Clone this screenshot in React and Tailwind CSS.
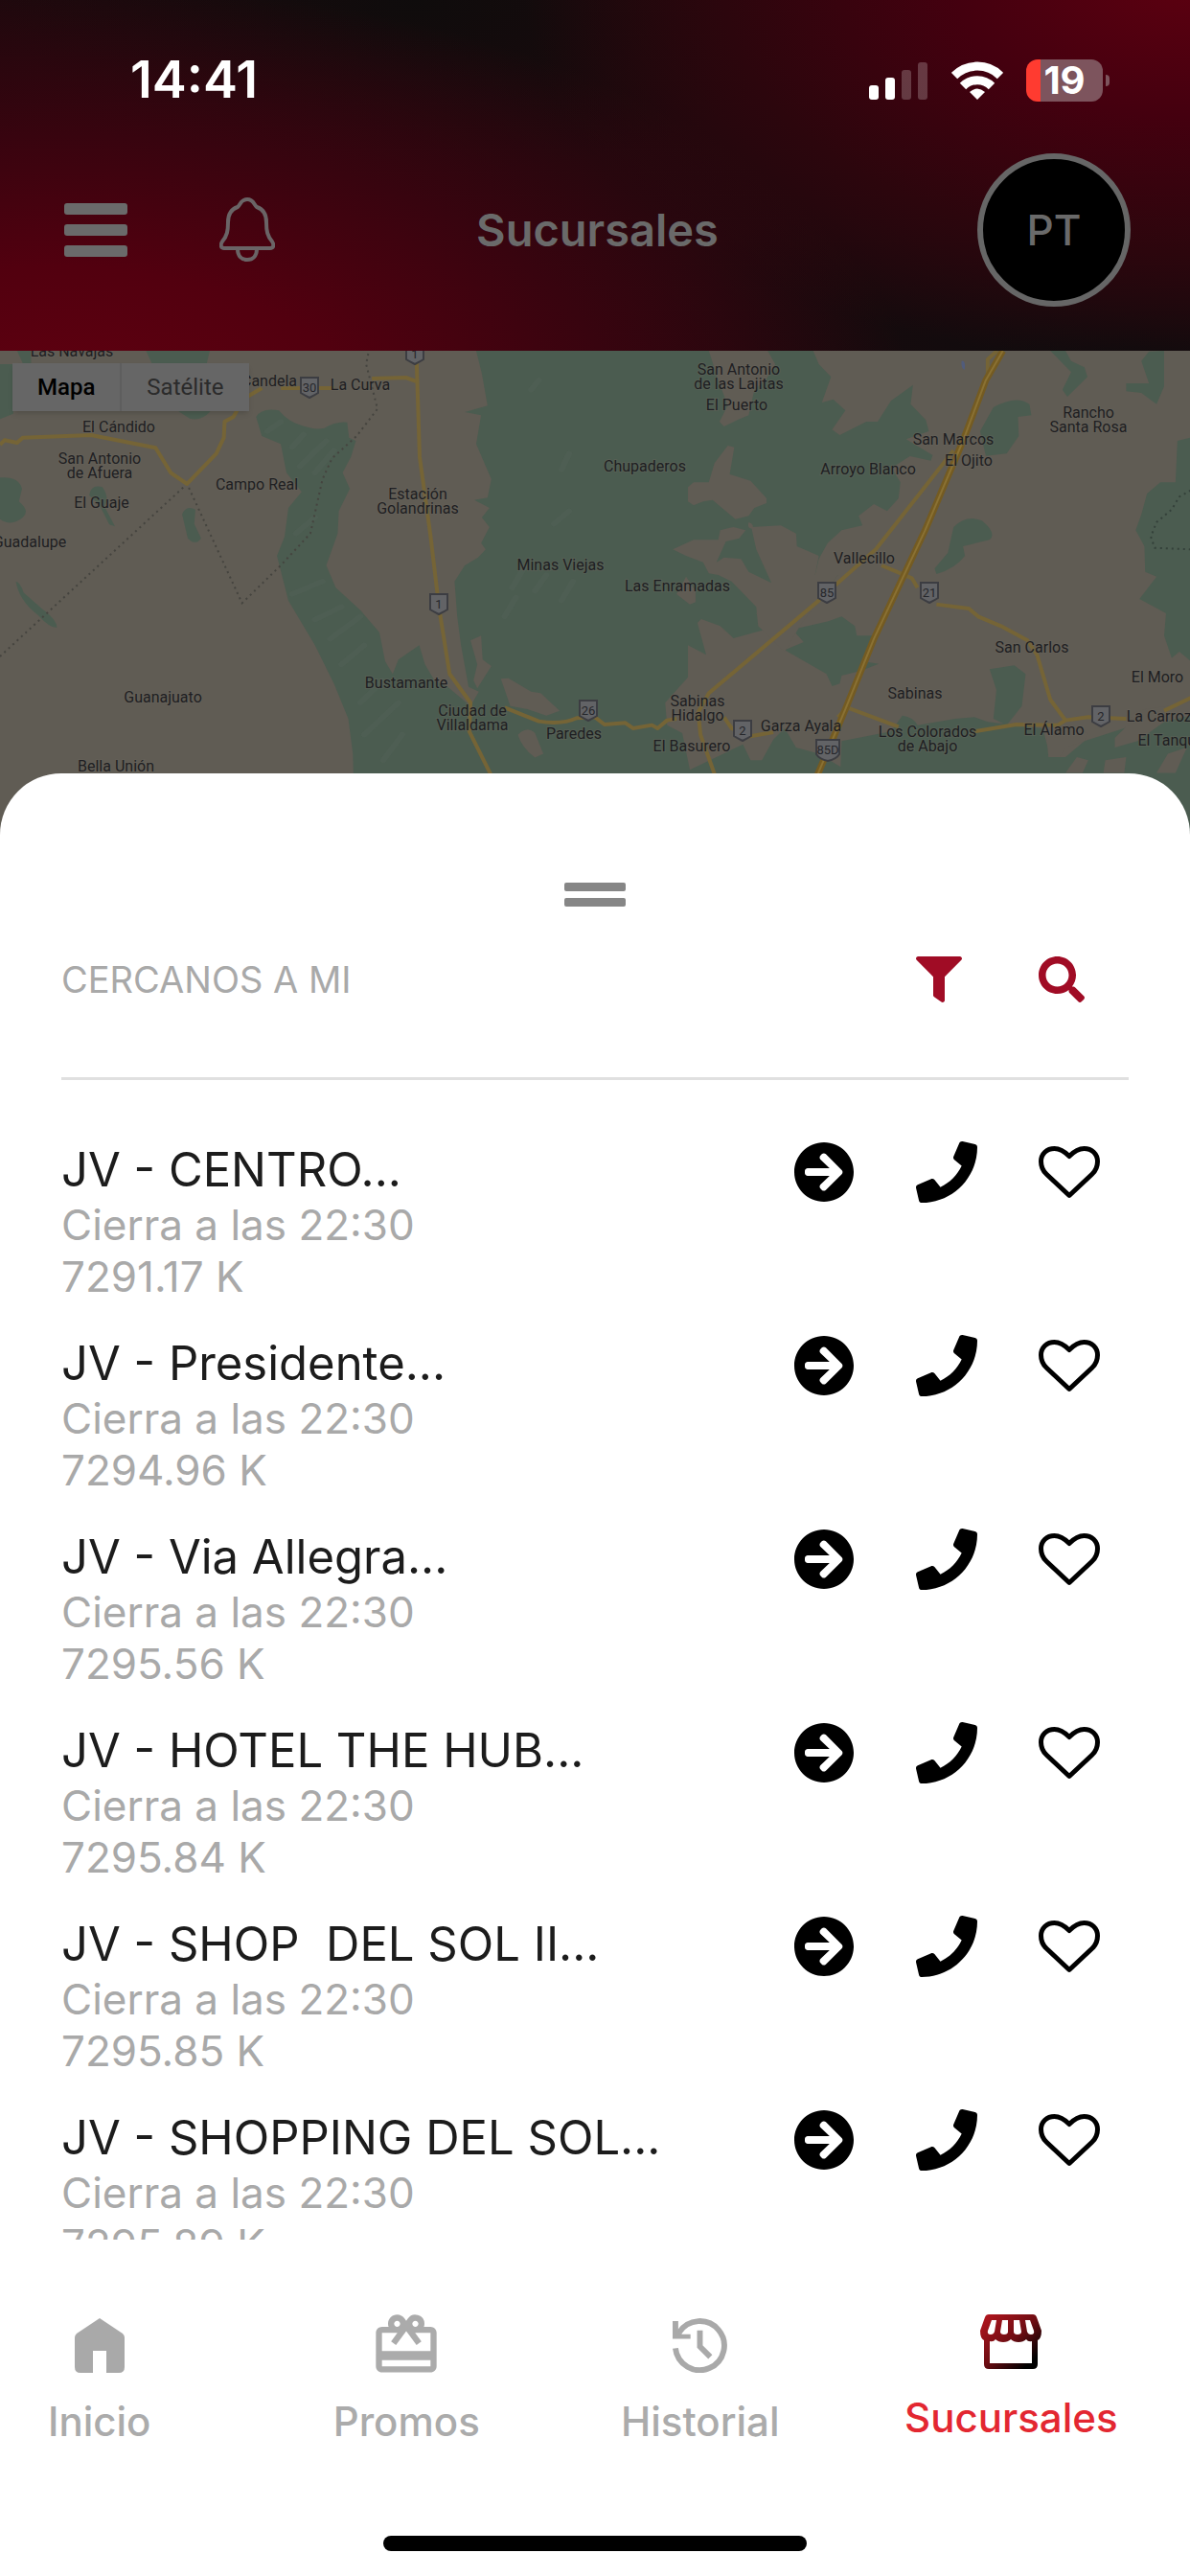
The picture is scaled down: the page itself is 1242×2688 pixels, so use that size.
import React, { useState } from 'react';
import { FaArrowCircleRight, FaFilter, FaPhone, FaSearch } from 'react-icons/fa';
import { MdCardGiftcard } from 'react-icons/md';

const sucursales = [
  { id: 1, nombre: 'JV - CENTRO...', horario: 'Cierra a las 22:30', distancia: '7291.17 K' },
  { id: 2, nombre: 'JV - Presidente...', horario: 'Cierra a las 22:30', distancia: '7294.96 K' },
  { id: 3, nombre: 'JV - Via Allegra...', horario: 'Cierra a las 22:30', distancia: '7295.56 K' },
  { id: 4, nombre: 'JV - HOTEL THE HUB...', horario: 'Cierra a las 22:30', distancia: '7295.84 K' },
  { id: 5, nombre: 'JV - SHOP  DEL SOL II...', horario: 'Cierra a las 22:30', distancia: '7295.85 K' },
  { id: 6, nombre: 'JV - SHOPPING DEL SOL...', horario: 'Cierra a las 22:30', distancia: '7295.89 K' },
];

// [x, y, lines]
const poblados = [
  [75, 6, ['Las Navajas']],
  [281, 37, ['Candela']],
  [376, 41, ['La Curva']],
  [124, 85, ['El Cándido']],
  [104, 118, ['San Antonio', 'de Afuera']],
  [106, 164, ['El Guaje']],
  [268, 145, ['Campo Real']],
  [436, 155, ['Estación', 'Golandrinas']],
  [31, 205, ['Guadalupe']],
  [585, 229, ['Minas Viejas']],
  [424, 352, ['Bustamante']],
  [170, 367, ['Guanajuato']],
  [493, 381, ['Ciudad de', 'Villaldama']],
  [599, 405, ['Paredes']],
  [121, 439, ['Bella Unión']],
  [771, 25, ['San Antonio', 'de las Lajitas']],
  [769, 62, ['El Puerto']],
  [995, 98, ['San Marcos']],
  [1011, 120, ['El Ojito']],
  [673, 126, ['Chupaderos']],
  [906, 129, ['Arroyo Blanco']],
  [1136, 70, ['Rancho', 'Santa Rosa']],
  [902, 222, ['Vallecillo']],
  [707, 251, ['Las Enramadas']],
  [1077, 315, ['San Carlos']],
  [955, 363, ['Sabinas']],
  [728, 371, ['Sabinas', 'Hidalgo']],
  [836, 397, ['Garza Ayala']],
  [722, 418, ['El Basurero']],
  [968, 403, ['Los Colorados', 'de Abajo']],
  [1100, 401, ['El Álamo']],
  [1208, 346, ['El Moro']],
  [1214, 387, ['La Carroza']],
  [1222, 412, ['El Tanque']],
];

const escudos = [
  [433, 3, '1'],
  [323, 38, '30'],
  [458, 264, '1'],
  [614, 375, '26'],
  [863, 252, '85'],
  [970, 252, '21'],
  [775, 396, '2'],
  [864, 416, '85D'],
  [1149, 381, '2'],
];

const Mapa = () => (
  <svg viewBox="0 0 1242 510" preserveAspectRatio="xMidYMin slice" className="h-full w-full" aria-label="Mapa de sucursales">
    <rect width="1242" height="510" fill="#605c54" />

    {/* west tile */}
    <g transform="translate(0 -6) scale(.396 .3333)" fill="#4b5c50">
      <path d="M675 225Q690 195 735 205Q760 240 790 250Q830 268 855 260Q885 238 915 242L920 290L938 300L925 350L903 400L922 450L893 520L890 590L860 690L885 760L950 830L1000 900L1015 990L1035 1030L1050 985L1105 940L1120 1000L1145 1050L1180 1070L1240 1130L1262 1085L1235 1070L1215 940L1205 850L1198 740L1225 690L1260 665L1280 640L1268 620L1290 570L1270 540L1290 510L1250 485L1285 478L1295 420L1255 310L1268 220L1225 210L1285 190L1270 90L1255 18H1570V1530H935L930 1280L918 1170L880 1060L830 940L760 800L730 660L750 600L760 510L795 460L755 400L740 310L690 285Z" />
      <path d="M0 415Q50 410 58 450L50 490Q80 520 60 540Q30 570 0 545Z" />
      <path d="M235 470Q240 435 270 445Q290 480 275 505L303 568L288 562L262 500Z" />
      <path d="M480 530Q490 500 515 515L512 560L530 605Q515 630 495 605Z" />
      <path d="M42 740Q55 745 62 775L110 825Q150 860 150 885Q130 885 100 845Q50 800 42 740Z" />
      <path d="M385 18H553L545 57H400ZM470 207H555Q530 240 500 230ZM0 60H35V215L0 232ZM45 18H82V57H60Z" />
      <path d="M1320 1045L1340 1043L1400 1085L1425 1090L1475 1145L1440 1160L1390 1140L1345 1130ZM1365 1220Q1390 1190 1410 1215L1432 1280L1410 1292Q1375 1260 1365 1220ZM1240 925L1268 910L1272 985L1295 1005L1258 1075L1248 1050L1258 1000Z" fill="#605c54" />
      <g fill="none" stroke="#5a6b5e" strokeWidth="16" strokeLinecap="round" opacity=".22">
        <path d="M705 270L740 240M770 320L800 280M790 380L860 300M830 400L880 330M780 590L830 540M770 780L850 740M830 860L900 820M870 920L950 850M900 1000L960 940M950 1120L1010 1050M960 1220L1050 1120M1010 1300L1060 1220M1350 760L1380 700M1410 770L1440 720M1330 850L1360 790M1480 800L1510 740M1460 560L1500 520M1400 140L1420 110M1480 390L1500 340" />
      </g>
      <path
        fill="none" stroke="#45443f" strokeWidth="2" strokeDasharray="2 4" vectorEffect="non-scaling-stroke"
        d="M0 975L493 435L638 808L740 690L818 590L850 420L875 355L940 285L995 200L965 60L972 18"
      />
      <g fill="none" stroke="#756436" strokeWidth="4" strokeLinejoin="round">
        <path vectorEffect="non-scaling-stroke" d="M0 312L12 298L45 306L60 290L240 282L410 322L450 400L493 435L570 340L590 290L592 240L615 225L625 205M640 170L690 135M740 135H880M980 105L1070 102L1100 115" />
        <path vectorEffect="non-scaling-stroke" d="M1098 50L1106 350L1135 600L1158 830L1185 1030L1240 1120L1237 1210L1300 1360M1330 1135L1420 1178Q1480 1190 1520 1168L1570 1165" />
      </g>
    </g>

    {/* east tile */}
    <g transform="translate(621 -6) scale(.396 .3333)" fill="#605c54">
      <path fill="#4b5c50" d="M0 18H575L590 60L622 100L598 180L628 170L660 205L625 265L645 282L715 240L745 240L780 175L838 125L832 185L872 235L880 270L820 295L890 345L885 362L830 348L782 385L805 430L800 480L770 520L735 498L695 535L705 565L650 580L613 620L590 670L580 720L640 720L600 785L530 770L425 840L450 890L365 918L330 880L280 858L270 870L293 970L245 940V1040L185 1120L190 1190L230 1215L250 1330V1530H0Z" />
      <path fill="#4b5c50" d="M520 890L560 880L615 865L650 850L685 880L690 910H735L720 960L705 990L748 998L700 1020L650 1035L645 1060L625 1068L610 1030L500 955L550 930ZM895 700L930 650L945 570Q980 530 1020 550Q1060 590 1040 610L970 630L975 660Q950 700 900 717ZM1015 270L1050 195Q1110 155 1145 185L1150 220L1115 225L1117 285L1085 340L1030 347ZM1200 18H1240L1255 50L1290 70L1298 100L1245 162L1232 140L1255 85ZM1440 50L1460 20L1500 18V130L1480 185L1440 150L1400 145L1400 120H1460ZM1490 430L1530 430L1535 300L1570 290V990L1540 960L1520 980L1500 910L1505 840L1435 795L1480 725L1450 710L1448 630L1425 580L1440 530L1455 465Z" />
      <path fill="#4b5c50" d="M1040 1015L1105 1003L1135 1030L1125 1130L1085 1190L1050 1170L1058 1080ZM440 1300L470 1235L500 1200L530 1260L590 1280L660 1330H740L640 1530H250V1330L390 1250L410 1300ZM650 1240L780 1210L810 1160Q840 1165 850 1190L950 1170L1000 1165L1035 1180L1180 1200L1200 1290L1240 1290L1290 1240L1420 1190L1570 1150V1530H640Z" />
      <path d="M300 18L455 18L475 60L450 110L420 140L405 220L375 235L340 255L328 240L350 190L325 110ZM350 315L367 320L355 405L410 425L452 480V495L420 510L405 535L370 545L310 485L285 490L260 502L245 490V445L260 430L300 430L315 370ZM405 555Q420 560 415 575Q400 575 405 555ZM205 640L260 610L325 610L330 580L365 570L397 580L380 605L345 615L320 680L340 665L385 670L405 710L465 745L425 640L412 570L490 565L530 590L532 630L590 660L580 720L640 720L610 770L545 870L500 960L430 880L425 820L360 740L325 720L300 715L285 680L240 660ZM215 780L240 725L265 770L265 805L250 812Z" />
      <path d="M1195 1290L1190 1220L1260 1200L1300 1215L1290 1240L1240 1260L1225 1290ZM1400 1160L1440 1175L1400 1195L1370 1230V1260L1430 1240L1500 1180L1570 1160V1120L1450 1140ZM1240 1340L1270 1290L1300 1300L1285 1340ZM1345 1300L1400 1290L1395 1340H1340ZM1480 1340L1510 1280L1560 1260L1530 1340Z" />
      <path fill="#515c7b" d="M966 50Q978 48 974 78Q964 72 966 50Z" />
      <g fill="none" stroke="#756436" strokeWidth="4" strokeLinejoin="round">
        <path vectorEffect="non-scaling-stroke" d="M945 330L740 640L640 745L590 800L300 1090L272 1150L278 1220L320 1360M755 690L800 712L835 730L850 760M900 812L985 825L1010 850L1070 880L1140 925L1165 970L1200 1110L1240 1175L1300 1165L1400 1170M1500 1145L1570 1105M1240 1175L1220 1190L1110 1188L1000 1210M800 1195L665 1135L640 1165M470 1212L410 1225L360 1200L340 1165M0 1165L25 1188L80 1183L100 1200L150 1190L165 1200L190 1175L215 1170" />
        <path vectorEffect="non-scaling-stroke" d="M1060 18L1035 45V90" />
      </g>
      <g fill="none" strokeLinejoin="round">
        <path vectorEffect="non-scaling-stroke" stroke="#745b22" strokeWidth="7" d="M1075 18L1030 110L970 300L870 580L735 920L660 1140L585 1350" />
        <path vectorEffect="non-scaling-stroke" stroke="#8a7133" strokeWidth="2" d="M1075 18L1030 110L970 300L870 580L735 920L660 1140L585 1350" />
        <path vectorEffect="non-scaling-stroke" stroke="#34413a" strokeWidth="2" strokeDasharray="2 4" d="M1570 455L1540 475L1520 515L1480 555L1465 600L1475 635L1570 640" />
      </g>
    </g>

    <g fontFamily="Roboto, sans-serif" fontSize="16" textAnchor="middle">
      {escudos.map(([x, y, numero]) => (
        <g key={`${numero}-${x}`}>
          <path
            transform={`translate(${x} ${y})`}
            d={numero.length > 2 ? 'M-12 -10H12V5Q9 10 0 12Q-9 10 -12 5Z' : 'M-9 -10H9V6Q6 8 0 11Q-6 8 -9 6Z'}
            fill="#626366" stroke="#3c3d42" strokeWidth="2"
          />
          <text x={x} y={y + 5} fontSize="13" fill="#26272b">{numero}</text>
        </g>
      ))}
      {poblados.map(([x, y, lineas]) => (
        <text key={lineas[0] + x} fill="#1e1e22" stroke="#68645c" strokeOpacity=".4" strokeWidth="2" paintOrder="stroke">
          {lineas.map((linea, i) => (
            <tspan key={linea} x={x} y={y + i * 15}>{linea}</tspan>
          ))}
        </text>
      ))}
    </g>
  </svg>
);

const StatusBar = () => (
  <div className="flex h-[120px] items-end justify-between pr-[84px] pb-[14px] pl-[136px] text-white">
    <span className="text-[54px] leading-[46px] font-semibold">14:41</span>
    <div className="flex items-center gap-6">
      <svg viewBox="0 0 62 40" className="h-10 w-[62px]" fill="#fff">
        <rect x="0" y="25" width="10" height="15" rx="3" />
        <rect x="17" y="17" width="10" height="23" rx="3" />
        <rect x="34" y="9" width="10" height="31" rx="3" opacity=".22" />
        <rect x="51" y="1" width="10" height="39" rx="3" opacity=".22" />
      </svg>
      <svg viewBox="0 0 54 40" className="h-10 w-[54px]" fill="none" stroke="#fff" strokeWidth="9">
        <path d="M3 15A34 34 0 0 1 51 15" />
        <path d="M12 26A21 21 0 0 1 42 26" />
        <path d="M27 40L19 32Q27 25 35 32Z" fill="#fff" stroke="none" />
      </svg>
      <div className="flex items-center gap-[3px]">
        <div className="flex h-11 w-20 items-center justify-center rounded-xl bg-linear-to-r from-[#ff3b30] from-[19%] to-[#7d545d] to-[19%] text-[40px] leading-none font-bold">
          19
        </div>
        <span className="h-3 w-1 rounded-r-full bg-[#7d545d]"></span>
      </div>
    </div>
  </div>
);

const Header = () => (
  <header className="h-[366px] shrink-0 bg-[#1c090d] bg-[radial-gradient(ellipse_72%_125%_at_5%_120%,#620010_0%,#52000f_35%,#38040f_65%,transparent_100%),radial-gradient(ellipse_56%_110%_at_100%_-5%,#5c0010_0%,#44000f_35%,#2c060d_70%,transparent_100%),radial-gradient(ellipse_35%_50%_at_35%_0%,#0f0c0c_0%,transparent_100%),radial-gradient(ellipse_45%_50%_at_95%_100%,#0e0c0d_0%,transparent_100%)]">
    <StatusBar />
    <div className="mt-10 flex h-40 items-center justify-between pr-[62px] pl-[67px] text-[#6a6a6a]">
      <div className="flex flex-1 items-center gap-24">
        <button type="button" aria-label="Menú" className="flex w-[66px] flex-col gap-[10px]">
          <span className="h-3 rounded-[3px] bg-[#6a6a6a]"></span>
          <span className="h-3 rounded-[3px] bg-[#6a6a6a]"></span>
          <span className="h-3 rounded-[3px] bg-[#6a6a6a]"></span>
        </button>
        <button type="button" aria-label="Notificaciones">
          <svg viewBox="0 0 58 68" className="h-[68px] w-[58px]" fill="none" stroke="#6a6466" strokeWidth="4" strokeLinejoin="round">
            <path d="M5 53C1 53 1 49 3 46C8 40 9 35 9 26C9 17 13 12 19 10C22 8 22 2 29 2S36 8 39 10C45 12 49 17 49 26C49 35 50 40 55 46C57 49 57 53 53 53Z" />
            <path d="M19 54C19 61 23 65 29 65S39 61 39 54" />
          </svg>
        </button>
      </div>
      <h1 className="text-[47px] font-semibold">Sucursales</h1>
      <div className="flex flex-1 justify-end">
        <button type="button" className="flex size-40 items-center justify-center rounded-full border-[6px] border-[#666] bg-black text-[44px] font-medium">
          PT
        </button>
      </div>
    </div>
  </header>
);

const HeartIcon = () => (
  <svg viewBox="0 0 64 64" className="size-16" fill="none" stroke="#000" strokeWidth="5" strokeLinejoin="round">
    <path d="M32 56.5L8.5 34.5C4 30.5 2.5 26 2.5 21C2.5 13 8.5 7.5 16.5 7.5C23 7.5 27.5 11 32 15.5C36.5 11 41 7.5 47.5 7.5C55.5 7.5 61.5 13 61.5 21C61.5 26 60 30.5 55.5 34.5Z" />
  </svg>
);

const SucursalItem = ({ sucursal }) => (
  <li className="flex h-[202px] items-start justify-between">
    <div className="whitespace-pre">
      <h3 className="text-[49px] leading-[60px] text-[#1c1c1c]">{sucursal.nombre}</h3>
      <p className="text-[44px] leading-[54px] text-[#a9a9a9]">{sucursal.horario}</p>
      <p className="text-[44px] leading-[54px] text-[#a9a9a9]">{sucursal.distancia}</p>
    </div>
    <div className="flex gap-16 pr-[30px] text-black">
      <button type="button" aria-label="Ver sucursal"><FaArrowCircleRight className="size-16" /></button>
      <button type="button" aria-label="Llamar"><FaPhone className="size-16" /></button>
      <button type="button" aria-label="Favorito"><HeartIcon /></button>
    </div>
  </li>
);

const HomeIcon = () => (
  <svg viewBox="0 0 52 57" className="h-[57px] w-[52px]" fill="#a9a9a9">
    <path d="M26 0L50 16Q52 18 52 20V51Q52 57 46 57H33V34H19V57H6Q0 57 0 51V20Q0 18 2 16Z" />
  </svg>
);

const HistoryIcon = () => (
  <svg viewBox="0 0 58 58" className="h-[57px] w-[57px]" fill="none" stroke="#a9a9a9" strokeWidth="6">
    <path d="M3 32A26 26 0 1 0 7 15" />
    <path d="M29 13V30L40 41" />
    <path d="M0 3H6V13L10 17H19V22H0Z" fill="#a9a9a9" stroke="none" />
  </svg>
);

const StoreIcon = () => (
  <svg viewBox="0 0 64 57" className="h-[57px] w-16">
    <defs>
      <linearGradient id="tienda" x1="0" y1="0" x2="1" y2="1">
        <stop offset="0" stopColor="#b8161f" />
        <stop offset=".5" stopColor="#6d0d13" />
        <stop offset=".85" stopColor="#000" />
      </linearGradient>
    </defs>
    <path
      fill="url(#tienda)" fillRule="evenodd"
      d="M9 0H55Q58 0 59 3L64 17Q64 25 60 27V52Q60 57 55 57H9Q4 57 4 52V27Q0 25 0 17L5 3Q6 0 9 0ZM10 28Q14 29 16 26Q19 29 24 29Q29 29 32 26Q35 29 40 29Q45 29 48 26Q50 29 54 28V51H10ZM12 6H17L15 18Q14 21 11 21Q7 21 8 17ZM23 6H29V18Q29 21 25 21Q21 21 21 18ZM35 6H41L43 18Q43 21 39 21Q35 21 35 18ZM47 6H52L56 17Q57 21 53 21Q50 21 49 18Z"
    />
  </svg>
);

const tabs = [
  { label: 'Inicio', icon: <HomeIcon /> },
  { label: 'Promos', icon: <MdCardGiftcard className="size-[76px]" /> },
  { label: 'Historial', icon: <HistoryIcon /> },
  { label: 'Sucursales', icon: <StoreIcon />, active: true },
];

const App = () => {
  const [vista, setVista] = useState('Mapa');

  return (
    <div className="flex h-screen flex-col overflow-hidden bg-white font-[Inter,sans-serif]">
      <Header />

      <div className="relative -mb-[69px] h-[510px] shrink-0 bg-[#605c54]">
        <Mapa />
        <div className="absolute top-[13px] left-[13px] flex h-[50px] bg-[#666] font-[Roboto,sans-serif] text-[24px] shadow-md">
          {['Mapa', 'Satélite'].map(opt => (
            <button key={opt} type="button" onClick={() => setVista(opt)}
              className={`px-[26px] first:border-r-2 border-[#5e5e5e] ${vista === opt ? 'font-medium text-black' : 'text-[#2b2b2b]'}`}
            >{opt}</button>
          ))}
        </div>
      </div>

      <main className="relative flex min-h-0 flex-1 flex-col rounded-t-[64px] bg-white px-16 pt-[114px]">
        <button type="button" aria-label="Expandir lista" className="flex w-16 flex-col gap-[7px] self-center">
          <span className="h-[9px] rounded-[2px] bg-[#868686]"></span>
          <span className="h-[9px] rounded-[2px] bg-[#868686]"></span>
        </button>

        <div className="mt-[52px] flex items-center justify-between border-b-[3px] border-[#e0e0e0] pr-[46px] pb-[78px]">
          <h2 className="text-[38px] leading-[48px] text-[#a9a9a9]">CERCANOS A MI</h2>
          <div className="flex gap-20 text-[#a00c25]">
            <button type="button" aria-label="Filtrar"><FaFilter className="size-12" /></button>
            <button type="button" aria-label="Buscar"><FaSearch className="size-12" /></button>
          </div>
        </div>

        <ul className="mt-16 min-h-0 flex-1 overflow-y-auto [scrollbar-width:none]">
          {sucursales.map(s => <SucursalItem key={s.id} sucursal={s} />)}
        </ul>
      </main>

      <footer className="flex h-[351px] shrink-0 flex-col items-center justify-between bg-white pt-[66px] pb-[26px]">
        <nav className="mr-2 -ml-14 grid grid-cols-[320fr_322fr_292fr_358fr] self-stretch">
          {tabs.map(tab => (
            <a key={tab.label} href="#" className={`flex flex-col items-center gap-3 text-[42px] leading-[48px] font-medium ${tab.active ? '-mt-1 text-[#e32731]' : 'text-[#ababab]'}`}>
              <span className="flex h-[88px] items-center">{tab.icon}</span>
              {tab.label}
            </a>
          ))}
        </nav>
        <div className="h-4 w-[442px] rounded-full bg-black"></div>
      </footer>
    </div>
  );
};

export default App;
